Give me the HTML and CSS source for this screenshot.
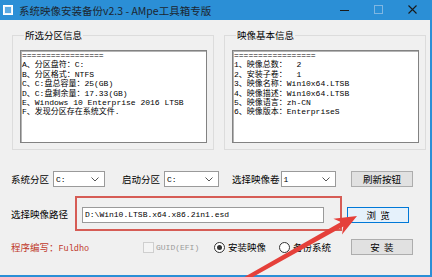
FILE: index.html
```html
<!DOCTYPE html>
<html lang="zh-CN">
<head>
    <meta charset="UTF-8">
    <meta name="viewport" content="width=device-width, initial-scale=1.0">
    <title>系统映像安装备份v2.3 - AMpe工具箱专版</title>
    <link rel="stylesheet" href="styles.css">
</head>
<body>
<div class="window">
    <div class="titlebar">
        <span class="app-icon"></span>
        <span class="title">系统映像安装备份v2.3 - AMpe工具箱专版</span>
        <span class="controls">
            <svg class="ctl" width="12" height="12" viewBox="0 0 12 12"><path d="M1 6.5h9" stroke="#1a1a1a" stroke-width="1"/></svg>
            <svg class="ctl ctl-off" width="12" height="12" viewBox="0 0 12 12"><rect x="1.5" y="1.5" width="8" height="8" fill="none" stroke="#7fb6e2" stroke-width="1"/></svg>
            <svg class="ctl" width="12" height="12" viewBox="0 0 12 12"><path d="M1.5 1.5l8 8M9.5 1.5l-8 8" stroke="#1a1a1a" stroke-width="1.1"/></svg>
        </span>
    </div>

    <div class="client">
        <div class="groups">
            <fieldset class="group">
                <legend>所选分区信息</legend>
                <div class="info">=================
A、分区盘符：C:
B、分区格式：NTFS
C、C:盘总容量：25(GB)
D、C:盘剩余量：17.33(GB)
E、Windows 10 Enterprise 2016 LTSB
F、发现分区存在系统文件.</div>
            </fieldset>
            <fieldset class="group">
                <legend>映像基本信息</legend>
                <div class="info">=================
1、映像总数：  2
2、安装子卷：  1
3、映像名称：Win10x64.LTSB
4、映像描述：Win10x64.LTSB
5、映像语言：zh-CN
6、映像版本：EnterpriseS</div>
            </fieldset>
        </div>

        <div class="row row-parts">
            <span class="lbl">系统分区</span>
            <div class="combo c1"><span>C:</span><svg width="8" height="5" viewBox="0 0 8 5"><path d="M0.5 0.5l3.5 3.5 3.5-3.5" fill="none" stroke="#555" stroke-width="1"/></svg></div>
            <span class="lbl l2">启动分区</span>
            <div class="combo c2"><span>C:</span><svg width="8" height="5" viewBox="0 0 8 5"><path d="M0.5 0.5l3.5 3.5 3.5-3.5" fill="none" stroke="#555" stroke-width="1"/></svg></div>
            <span class="lbl l3">选择映像卷</span>
            <div class="combo c3"><span>1</span><svg width="8" height="5" viewBox="0 0 8 5"><path d="M0.5 0.5l3.5 3.5 3.5-3.5" fill="none" stroke="#555" stroke-width="1"/></svg></div>
            <button class="btn">刷新按钮</button>
        </div>

        <div class="row row-path">
            <span class="lbl">选择映像路径</span>
            <div class="mark">
                <div class="path">D:\Win10.LTSB.x64.x86.2in1.esd</div>
            </div>
            <button class="btn btn-focus">浏&nbsp;&nbsp;览</button>
        </div>

        <div class="row row-bottom">
            <span class="author">程序编写：<span class="name">Fuldho</span></span>
            <span class="check"><i class="box"></i>GUID(EFI)</span>
            <span class="opt opt-on"><i class="dot"></i>安装映像</span>
            <span class="opt"><i class="dot"></i>备份系统</span>
            <button class="btn">安&nbsp;&nbsp;装</button>
        </div>
    </div>

    <svg class="arrow" width="432" height="277" viewBox="0 0 432 277">
        <polygon points="357,216 333.4,218.7 340.9,222 244,277.2 246,280.8 343.3,226.4 342,234.5" fill="#e5403a"/>
    </svg>
</div>
</body>
</html>
```

FILE: styles.css
```css
body {
    margin: 0;
    font-family: "Noto Sans CJK SC", "Noto Sans", sans-serif;
    font-size: 9.5px;
    color: #000;
}
.window {
    position: relative;
    width: 432px;
    height: 277px;
    overflow: hidden;
}
.titlebar {
    height: 20px;
    background: #2b8fd6;
    display: flex;
    align-items: center;
}
.app-icon {
    width: 8px;
    height: 8px;
    margin-left: 3px;
    border: 1px solid #fff;
    background: #5aa9e2;
    box-shadow: inset 0 0 0 1px #e8f3fb;
}
.title {
    margin-left: 6px;
    font-size: 10.5px;
    color: #1c2630;
}
.controls {
    margin-left: auto;
    display: flex;
    gap: 22px;
    margin-right: 13px;
}
.client {
    height: 255px;
    background: #f0f0f0;
    border-right: 2px solid #2b8fd6;
    border-bottom: 2px solid #2b8fd6;
}
.groups {
    display: flex;
    gap: 10px;
    padding-left: 12px;
    padding-top: 9px;
}
.group {
    width: 187px;
    margin: 0;
    padding: 0 6px 6px 7px;
    border: 1px solid #dcdcdc;
    min-width: 0;
}
.group legend {
    padding: 0 1px;
    margin-left: 4px;
    line-height: 12px;
}
.info {
    margin-top: 9px;
    height: 91px;
    background: #fff;
    border: 1px solid #828282;
    box-shadow: inset 1px 1px 0 #b4b4b4;
    padding: 0 0 0 1px;
    font-family: "Liberation Mono", "Noto Sans CJK SC", monospace;
    font-size: 8px;
    line-height: 9.4px;
    white-space: pre;
    overflow: hidden;
}
.row {
    display: flex;
    align-items: center;
    padding-left: 11px;
}
.row-parts {
    margin-top: 21px;
    height: 16px;
}
.combo {
    height: 14px;
    margin-left: 4px;
    background: #fff;
    border: 1px solid #9a9a9a;
    display: flex;
    align-items: center;
    justify-content: space-between;
    padding: 0 5px 0 2px;
    font-family: "Liberation Mono", monospace;
    font-size: 8px;
}
.c1 { width: 43px; }
.c2 { width: 46px; }
.c3 { width: 46px; margin-left: 1px; }
.l2 { margin-left: 17px; }
.l3 { margin-left: 13px; }
.btn {
    width: 62px;
    height: 16px;
    padding: 0;
    margin-left: auto;
    margin-right: 17px;
    background: #e1e1e1;
    border: 1px solid #adadad;
    font-family: inherit;
    font-size: 9.5px;
    line-height: 14px;
    color: #000;
}
.btn-focus {
    background: #e5f1fb;
    border-color: #0078d7;
    margin-top: 3px;
}
.row-path {
    margin-top: 9px;
    height: 35px;
}
.mark {
    margin-left: 7px;
    width: 263px;
    height: 31px;
    border: 2px solid #d65c55;
    box-sizing: content-box;
    display: flex;
    align-items: center;
}
.path {
    margin-left: 5px;
    margin-top: 3px;
    width: 238px;
    height: 14px;
    background: #fff;
    border: 1px solid #9a9a9a;
    padding-left: 2px;
    font-family: "Liberation Mono", monospace;
    font-size: 8px;
    line-height: 14px;
}
.row-path .btn {
    margin-left: 5px;
}
.row-bottom {
    margin-top: 8px;
    height: 16px;
}
.author {
    color: #c0392b;
    width: 132px;
}
.author .name {
    font-family: "Liberation Mono", monospace;
    font-size: 8.5px;
}
.check {
    display: flex;
    align-items: center;
    color: #9a9a9a;
    font-family: "Liberation Mono", monospace;
    font-size: 8px;
    width: 71px;
}
.box {
    width: 9px;
    height: 9px;
    border: 1px solid #cfcfcf;
    background: #f4f4f4;
    margin-right: 2px;
}
.opt {
    display: flex;
    align-items: center;
    width: 65px;
}
.dot {
    width: 9px;
    height: 9px;
    border: 1px solid #333;
    border-radius: 50%;
    background: #fff;
    margin-right: 3px;
    box-sizing: content-box;
    display: flex;
    align-items: center;
    justify-content: center;
}
.opt-on .dot::after {
    content: "";
    width: 5px;
    height: 5px;
    border-radius: 50%;
    background: #333;
}
.arrow {
    position: absolute;
    left: 0;
    top: 0;
    pointer-events: none;
}
```
